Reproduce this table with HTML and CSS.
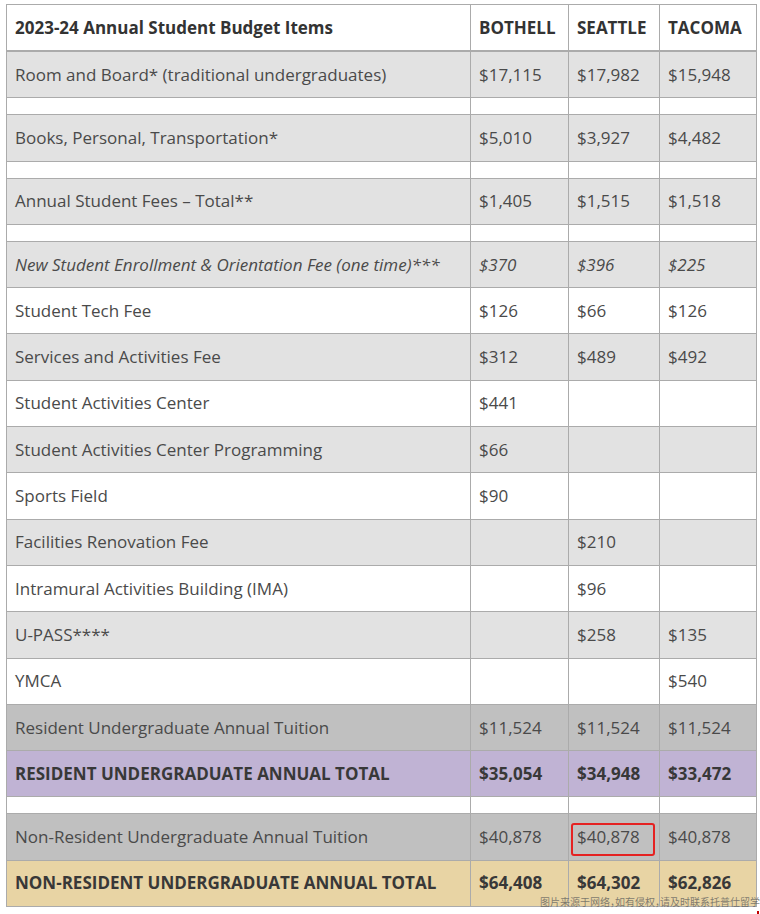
FILE: index.html
```html
<!DOCTYPE html>
<html lang="en">
<head>
<meta charset="utf-8">
<title>2023-24 Annual Student Budget Items</title>
<link rel="stylesheet" href="styles.css">
</head>
<body>
<div class="page">
  <table class="budget">
    <colgroup>
      <col class="c-item">
      <col class="c-b">
      <col class="c-s">
      <col class="c-t">
    </colgroup>
    <thead>
      <tr class="head">
        <th>2023-24 Annual Student Budget Items</th>
        <th>BOTHELL</th>
        <th>SEATTLE</th>
        <th>TACOMA</th>
      </tr>
    </thead>
    <tbody>
      <tr class="grey"><td>Room and Board* (traditional undergraduates)</td><td>$17,115</td><td>$17,982</td><td>$15,948</td></tr>
      <tr class="spacer"><td></td><td></td><td></td><td></td></tr>
      <tr class="grey"><td>Books, Personal, Transportation*</td><td>$5,010</td><td>$3,927</td><td>$4,482</td></tr>
      <tr class="spacer"><td></td><td></td><td></td><td></td></tr>
      <tr class="grey"><td>Annual Student Fees – Total**</td><td>$1,405</td><td>$1,515</td><td>$1,518</td></tr>
      <tr class="spacer"><td></td><td></td><td></td><td></td></tr>
      <tr class="grey italic"><td>New Student Enrollment &amp; Orientation Fee (one time)***</td><td>$370</td><td>$396</td><td>$225</td></tr>
      <tr class="white"><td>Student Tech Fee</td><td>$126</td><td>$66</td><td>$126</td></tr>
      <tr class="grey"><td>Services and Activities Fee</td><td>$312</td><td>$489</td><td>$492</td></tr>
      <tr class="white"><td>Student Activities Center</td><td>$441</td><td></td><td></td></tr>
      <tr class="grey"><td>Student Activities Center Programming</td><td>$66</td><td></td><td></td></tr>
      <tr class="white"><td>Sports Field</td><td>$90</td><td></td><td></td></tr>
      <tr class="grey"><td>Facilities Renovation Fee</td><td></td><td>$210</td><td></td></tr>
      <tr class="white"><td>Intramural Activities Building (IMA)</td><td></td><td>$96</td><td></td></tr>
      <tr class="grey"><td>U-PASS****</td><td></td><td>$258</td><td>$135</td></tr>
      <tr class="white"><td>YMCA</td><td></td><td></td><td>$540</td></tr>
      <tr class="tuition"><td>Resident Undergraduate Annual Tuition</td><td>$11,524</td><td>$11,524</td><td>$11,524</td></tr>
      <tr class="total resident"><td>RESIDENT UNDERGRADUATE ANNUAL TOTAL</td><td>$35,054</td><td>$34,948</td><td>$33,472</td></tr>
      <tr class="spacer"><td></td><td></td><td></td><td></td></tr>
      <tr class="tuition"><td>Non-Resident Undergraduate Annual Tuition</td><td>$40,878</td><td class="marked"><span class="highlight"></span>$40,878</td><td>$40,878</td></tr>
      <tr class="total nonresident"><td>NON-RESIDENT UNDERGRADUATE ANNUAL TOTAL</td><td>$64,408</td><td>$64,302</td><td>$62,826</td></tr>
    </tbody>
  </table>
  <div class="watermark">图片来源于网络，如有侵权，请及时联系托普仕留学删除</div>
  <span class="corner-mark"></span>
</div>
</body>
</html>
```

FILE: styles.css
```css
html, body {
  margin: 0;
  padding: 0;
  background: #ffffff;
}

.page {
  position: relative;
  width: 760px;
  height: 914px;
  overflow: hidden;
  padding: 4px 0 0 6px;
  box-sizing: border-box;
  font-family: "Open Sans", "Noto Sans", sans-serif;
}

.budget {
  border-collapse: collapse;
  table-layout: fixed;
  width: 750px;
  font-size: 17px;
  color: #4a4a4a;
}

.c-item { width: 464px; }
.c-b { width: 98px; }
.c-s { width: 91px; }
.c-t { width: 97px; }

.budget th,
.budget td {
  border: 1px solid #ababab;
  padding: 0 8px;
  text-align: left;
  vertical-align: middle;
  line-height: 24px;
  white-space: nowrap;
}

.head th {
  height: 45px;
  font-weight: 700;
  color: #333333;
  background: #ffffff;
  border-bottom: 2px solid #ababab;
}

.budget tbody td {
  height: 45.3px;
}

.budget tbody .spacer td {
  height: 16px;
  background: #ffffff;
}

.grey td { background: #e2e2e2; }
.white td { background: #ffffff; }
.tuition td { background: #c0c0c0; }
.resident td { background: #c0b3d4; }
.nonresident td { background: #e8d4a4; }

.italic td { font-style: italic; }

.total td {
  font-weight: 700;
  color: #383838;
}

.marked {
  position: relative;
}

.highlight {
  position: absolute;
  left: 2px;
  top: 9px;
  width: 80px;
  height: 29px;
  border: 2px solid #e52222;
  border-radius: 3px;
}

.watermark {
  position: absolute;
  left: 540px;
  top: 896px;
  font-family: "Noto Sans CJK SC", sans-serif;
  font-size: 10px;
  line-height: 12px;
  font-feature-settings: "halt";
  color: rgba(90, 90, 90, 0.75);
  white-space: nowrap;
}

.corner-mark {
  position: absolute;
  left: 757px;
  top: 911px;
  width: 2px;
  height: 3px;
  background: #c00000;
}
```
